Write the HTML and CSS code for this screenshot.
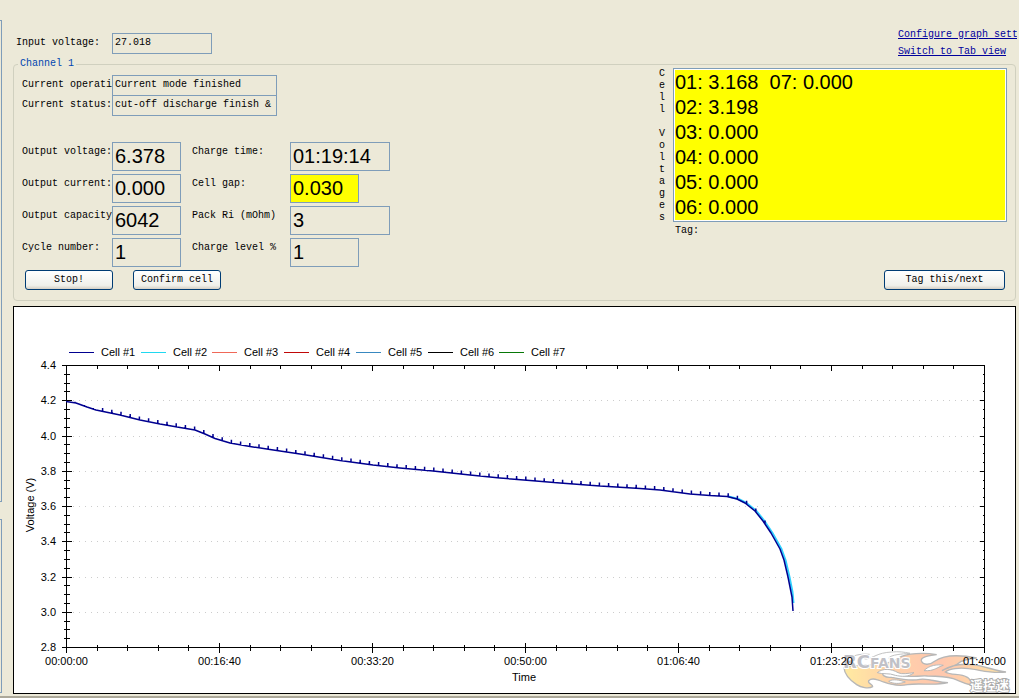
FILE: index.html
```html
<!DOCTYPE html>
<html lang="en">
<head>
<meta charset="utf-8">
<title>Charger channel</title>
<link rel="stylesheet" href="styles.css">
</head>
<body>
<div class="window">
  <div class="rail">
    <div class="rail-pane rail-main"></div>
    <div class="rail-pane rail-log"></div>
  </div>
  <main class="main">
    <header class="header">
      <div class="input-row">
        <label for="vin">Input voltage:</label>
        <input class="field vin" id="vin" readonly value="27.018">
      </div>
      <nav class="links">
        <a href="#">Configure graph settings</a>
        <a href="#">Switch to Tab view</a>
      </nav>
    </header>
    <fieldset class="channel">
      <legend>Channel 1</legend>
      <div class="channel-body">
        <div class="status">
          <div class="modes">
            <label for="op">Current operation:</label>
            <input class="field" id="op" readonly value="Current mode finished">
            <label for="st">Current status:</label>
            <input class="field" id="st" readonly value="cut-off discharge finish &amp;">
          </div>
          <div class="readings">
            <label for="ov">Output voltage:</label><input class="field big" id="ov" readonly value="6.378">
            <label for="ct">Charge time:</label><input class="field big wide" id="ct" readonly value="01:19:14">
            <label for="oc">Output current:</label><input class="field big" id="oc" readonly value="0.000">
            <label for="cg">Cell gap:</label><input class="field big alert" id="cg" readonly value="0.030">
            <label for="cap">Output capacity:</label><input class="field big" id="cap" readonly value="6042">
            <label for="ri">Pack Ri (mOhm)</label><input class="field big wide" id="ri" readonly value="3">
            <label for="cy">Cycle number:</label><input class="field big" id="cy" readonly value="1">
            <label for="cl">Charge level %</label><input class="field big" id="cl" readonly value="1">
          </div>
          <div class="actions">
            <button class="btn" type="button">Stop!</button>
            <button class="btn" type="button">Confirm cell</button>
          </div>
        </div>
        <div class="cells">
          <label class="cells-label" for="cells">C
e
l
l

V
o
l
t
a
g
e
s</label>
          <div class="cells-side">
            <textarea class="cells-box" id="cells" rows="6" readonly>01: 3.168  07: 0.000
02: 3.198
03: 0.000
04: 0.000
05: 0.000
06: 0.000</textarea>
            <span class="tag">Tag:</span>
            <button class="btn btn-tag" type="button">Tag this/next</button>
          </div>
        </div>
      </div>
    </fieldset>
    <section class="chart">
      <svg id="plot" viewBox="0 0 1001 386" role="img" aria-label="Cell voltage over time">
        <defs>
          <linearGradient id="fire" x1="0" x2="1">
            <stop offset="0" stop-color="#ffe27a"/>
            <stop offset=".3" stop-color="#ffbe86"/>
            <stop offset=".6" stop-color="#ffb08c"/>
            <stop offset="1" stop-color="#ffd880"/>
          </linearGradient>
        </defs>
        <g class="mark">
          <g transform="translate(806 333) scale(.3333)">
            <path class="flame-line" d="M74 62C96 46 124 40 148 43C132 50 124 55 138 57C160 55 170 38 216 36C236 34 252 36 270 40C244 42 214 44 206 54"/>
            <path class="flame" d="M236 54C258 38 316 38 350 44C326 47 302 50 304 62C308 76 330 76 344 64C372 44 420 44 470 54C440 56 424 62 412 72C398 82 380 82 366 92C392 76 424 70 456 74C498 78 520 92 558 96C516 102 482 90 446 86C418 82 388 86 376 96C396 108 420 98 442 112C452 120 462 134 482 138C440 138 424 124 400 116C374 108 350 108 322 108C296 106 272 114 244 106C226 100 212 90 194 96C178 104 198 114 214 112C244 118 270 124 300 118C328 114 352 128 384 128C340 138 300 128 262 134C232 140 212 134 190 126C172 118 156 112 146 122C142 132 160 132 158 140C146 148 122 142 110 134C92 122 74 106 72 84C98 70 208 82 236 54Z"/>
            <path class="flame-gap" d="M172 98C188 84 214 86 234 98C246 104 264 100 282 98C266 112 244 110 226 106C206 98 190 104 172 98Z"/>
            <path class="flame-gap" d="M206 124C218 116 240 120 256 126C240 132 218 132 206 124Z"/>
            <path class="flame-gap" d="M312 92C326 76 354 72 370 76C350 82 344 94 312 92Z"/>
          </g>
          <text class="brand" x="829" y="361"><tspan>RC</tspan><tspan class="brand-small">FANS</tspan></text>
          <text class="brand-cn" x="956" y="383">遥控迷</text>
        </g>
        <g id="plot-content"></g>
      </svg>
    </section>
  </main>
</div>
<script src="chart.js"></script>
</body>
</html>
```
FILE: styles.css
```css
* { box-sizing: border-box; }

body {
  margin: 0;
  overflow: hidden;
  background: #ece9d8;
  color: #000;
  font: 10px/12px "Liberation Mono", "Noto Sans CJK SC", monospace;
}

input, textarea, button { font: inherit; color: inherit; margin: 0; border-radius: 0; }

.window {
  display: flex;
  min-height: 100vh;
  padding-right: 3px;
  border-bottom: 2px solid #aca899;
}

.rail {
  display: flex;
  flex: none;
  flex-direction: column;
  gap: 17px;
  width: 13px;
  padding: 20px 0 3px;
}
.rail-pane { width: 2px; border: 1px solid #7f9db9; border-left: 0; }
.rail-main { flex: 14; }
.rail-log { flex: 5; }

.main { flex: 1; min-width: 0; padding-top: 26px; }

.header { display: flex; justify-content: space-between; }
.input-row { display: flex; gap: 12px; padding: 7px 0 0 3px; height: 34px; }
.input-row label { padding-top: 4px; }
.links { width: 119px; margin-right: -1px; overflow: hidden; line-height: 17px; }
.links a { display: block; color: #00009c; white-space: nowrap; }

.field {
  width: 165px;
  height: 21px;
  padding: 0 2px 2px;
  border: 1px solid #7f9db9;
  background: transparent;
}
.field.vin { width: 100px; }
.field.big { width: 69px; height: 29px; padding: 0 2px; font: 20px "Liberation Sans", Arial, sans-serif; }
.field.wide { width: 100px; }
.field.alert { background: #ff0; }

.channel {
  margin: 0;
  padding: 0 8px 10px;
  border: 1px solid #d0d0bf;
  border-radius: 4px;
}
.channel legend { height: 8px; margin-left: -4px; padding: 0 2px; line-height: 8px; color: #0046b0; }
.channel-body { display: flex; justify-content: space-between; }

.status { padding-top: 7px; }
.modes { display: grid; grid-template-columns: 90px 165px; grid-auto-rows: 20px; }
.modes label { padding-top: 4px; }
.modes label, .readings label { overflow: hidden; white-space: nowrap; }
.readings {
  display: grid;
  grid-template-columns: 90px 80px 98px 100px;
  grid-auto-rows: 29px;
  row-gap: 3px;
  margin-top: 27px;
}
.readings label { padding-top: 4px; }
.actions { display: flex; gap: 20px; padding: 3px 0 0 3px; }

.btn {
  width: 88px;
  height: 20px;
  padding: 0;
  border: 1px solid #003c74;
  border-radius: 3px;
  background: linear-gradient(#fff, #f0f0ea 80%, #d6d0c5);
}
.btn-tag { width: 121px; margin: auto 2px 0 auto; }

.cells { display: flex; gap: 8px; }
.cells-label { white-space: pre; }
.cells-side { display: flex; flex-direction: column; width: 334px; }
.cells-box {
  display: block;
  height: 154px;
  padding: 1px;
  border: 1px solid #7f9db9;
  outline: 1px solid #fff;
  outline-offset: -2px;
  background: #ff0;
  font: 20px/25px "Liberation Sans", Arial, sans-serif;
  overflow: hidden;
  resize: none;
}
.tag { padding: 3px 2px; }

.chart { margin-top: 5px; border: 1px solid #000; background: #fff; }
.chart svg { display: block; width: 100%; height: auto; }
.chart text { font: 11px "Liberation Sans", Arial, sans-serif; }
.axis { fill: none; stroke: #000; shape-rendering: crispEdges; }
.grid { stroke: #ccc; stroke-dasharray: 1 5; shape-rendering: crispEdges; }
.middle { text-anchor: middle; }
.end { text-anchor: end; }
.trace { fill: none; stroke-width: 1.5; stroke-linejoin: round; }
.trace-1 { stroke: #000090; }
.trace-2 { stroke: #30d0ff; stroke-width: 2; }

.mark { opacity: .7; }
.flame { fill: url(#fire); stroke: #999; stroke-width: 4; }
.flame-line { fill: none; stroke: #aaa; stroke-width: 3; }
.flame-gap { fill: #fff; stroke: #999; stroke-width: 3; }
.chart .brand { font: bold 18px "DejaVu Sans", Verdana, sans-serif; fill: #a8a8b0; stroke: #fff; stroke-width: 2; paint-order: stroke; }
.chart .brand-small { font-size: 14px; }
.chart .brand-cn { font: bold 13px "Noto Sans CJK SC", sans-serif; fill: #fff; stroke: #888; stroke-width: 2; paint-order: stroke; }
```
FILE: chart.js
```js
const NS = "http://www.w3.org/2000/svg";
const root = document.getElementById("plot-content");
const L = 52.5, R = 970.5, T = 58.5, B = 340.5;

function add(tag, attrs, text) {
  const el = document.createElementNS(NS, tag);
  for (const k in attrs) el.setAttribute(k, attrs[k]);
  if (text) el.textContent = text;
  root.appendChild(el);
}
const snap = v => Math.floor(v) + 0.5;

// Legend
["#000090", "#20d8f0", "#f06858", "#c00808", "#3888c0", "#000000", "#087808"].forEach((color, i) => {
  const x = 55 + Math.round(i * 71.7);
  add("rect", { x, y: 45, width: 25, height: 1, fill: color });
  add("text", { x: x + 32, y: 49 }, "Cell #" + (i + 1));
});

// Voltage axis
let d = `M${L} ${T}H${R}V${B}H${L}Z`;
for (let i = 0; i <= 32; i++) {
  const y = snap(T + i * (B - T) / 32);
  const major = i % 4 === 0;
  d += major ? `M${L - 5} ${y}h10M${R} ${y}h-5` : `M${L - 3} ${y}h6M${R} ${y}h-2`;
  if (major) {
    add("text", { x: 42, y: y + 3, class: "end" }, (4.4 - i / 20).toFixed(1));
    if (i && i < 32) add("path", { d: `M${L + 6} ${y}H${R - 5}`, class: "grid" });
  }
}

// Time axis
const times = ["00:00:00", "00:16:40", "00:33:20", "00:50:00", "01:06:40", "01:23:20", "01:40:00"];
for (let i = 0; i <= 30; i++) {
  const x = snap(L + i * (R - L) / 30);
  const major = i % 5 === 0;
  d += major ? `M${x} ${B - 5}v10M${x} ${T}v5` : `M${x} ${B - 3}v6M${x} ${T}v3`;
  if (major) add("text", { x, y: 358, class: "middle" }, times[i / 5]);
}
add("path", { d, class: "axis" });
add("text", { x: 510, y: 374, class: "middle" }, "Time");
add("text", { class: "middle", transform: "translate(20 198) rotate(-90)" }, "Voltage (V)");

// Discharge curve with a small recovery spike at every sampling pause
const pts = [[52,94.5],[62,96],[73,100],[82,103],[106,108],[126,113],[146,117],[166,120.5],[181,123],[191,127],
  [201,131.5],[216,136],[236,139.5],[256,142.5],[286,147],[326,153.5],[359,158],[386,161],[419,164],[456,168],
  [486,171],[516,173.5],[546,176],[586,179],[626,181.5],[646,183],[676,187],[696,188.5],[713,189.5],[723,192],
  [731,196],[741,204],[749,214],[757,226],[766,242],[770,253],[774,270],[777,285],[778,290],[779,304]];
function yAt(x) {
  const i = Math.max(1, pts.findIndex(p => p[0] >= x));
  const [a, b] = [pts[i - 1], pts[i]];
  return a[1] + (b[1] - a[1]) * (x - a[0]) / (b[0] - a[0]);
}
const line = p => "M" + p.map(q => q.join(" ")).join("L");
const cell2 = pts.filter(p => p[0] >= 713 && p[0] < 778).map(([x, y]) => [x + 1.5, y]);
add("path", { d: line(cell2.concat([[779.5, 296]])), class: "trace trace-2" });
let spikes = "";
for (let x = 61; x < 760; x += 9.2) {
  const y = yAt(x);
  spikes += `M${x.toFixed(1)} ${y.toFixed(1)}v${x < 85 ? -1 : -3.5}`;
}
add("path", { d: line(pts) + spikes, class: "trace trace-1" });
```
